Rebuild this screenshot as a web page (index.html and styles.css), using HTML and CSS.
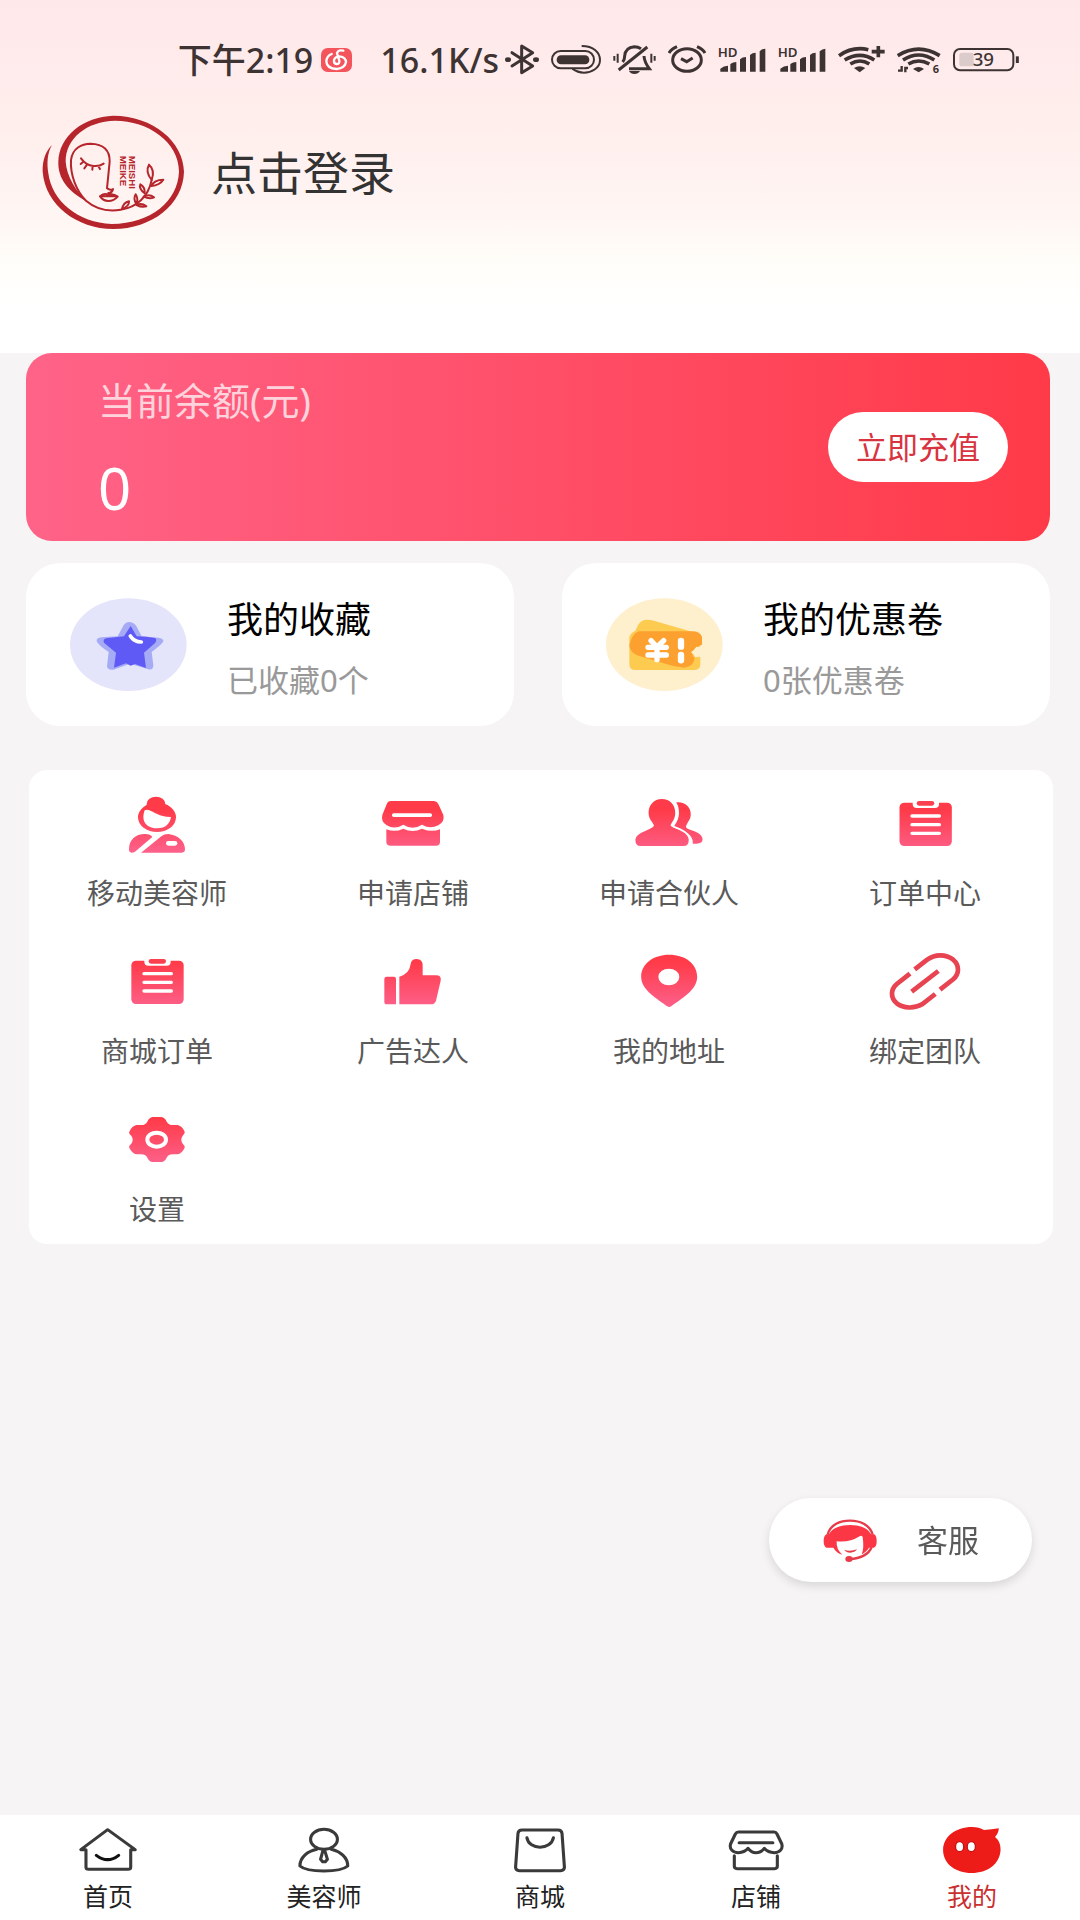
FILE: index.html
```html
<!DOCTYPE html>
<html lang="zh-CN">
<head>
<meta charset="utf-8">
<meta name="viewport" content="width=device-width, initial-scale=1">
<title>我的</title>
<link rel="stylesheet" href="styles.css">
</head>
<body>
<header class="header">
  <div class="status">
    <span class="status-text">下午2:19</span>
    <svg class="app-badge" width="31" height="48" viewBox="498 18 93 144" fill="none"><rect x="498" y="54" width="93" height="72" rx="20" fill="#f4555c"/><path d="M565 62Q549 58 546 70L553 92Q554 102 545 102Q536 101 537 91Q539 80 553 79Q573 81 573 97Q569 115 545 117Q515 115 514 94Q515 78 530 72" stroke="#fff" stroke-width="7" stroke-linecap="round"/></svg>
    <span class="status-text">16.1K/s</span>
    <div class="status-icons">
      <svg width="34" height="48" viewBox="1047 18 102 144" fill="none" stroke="#3d3333" stroke-width="9" stroke-linejoin="round" stroke-linecap="round"><path d="M1068 68L1130 108L1097 128V48L1130 68L1068 108"/><ellipse cx="1056" cy="89" rx="9" ry="7" fill="#3d3333" stroke="none"/><ellipse cx="1140" cy="89" rx="9" ry="7" fill="#3d3333" stroke="none"/></svg>
      <svg width="50" height="48" viewBox="1186 18 150 144" fill="none" stroke="#3d3333" stroke-width="6"><rect x="1203" y="76" width="98" height="27" rx="13" fill="#3d3333" stroke="none"/><rect x="1189" y="63" width="126" height="52" rx="26"/><path d="M1278 48C1314 48 1333 68 1333 90C1333 115 1306 128 1285 128C1270 128 1258 122 1250 116"/></svg>
      <svg width="43" height="48" viewBox="55 18 129 144" fill="none" stroke="#3d3333" stroke-width="9"><path d="M72 120L158 51"/><path d="M84 96Q90 89 90 78Q92 52 119 50Q130 50 139 56M148 78Q149 96 164 116H103"/><path d="M103 123H136Q131 132 119 132Q108 132 103 123Z" fill="#3d3333" stroke="none"/><path d="M59 78V92M69 71V98M170 71V98M180 78V92" stroke-width="6"/></svg>
      <svg width="38" height="48" viewBox="223 18 114 144" fill="none" stroke="#3d3333" stroke-width="9"><ellipse cx="280" cy="90" rx="43" ry="34"/><path d="M226 69Q233 57 250 50M310 50Q327 57 334 69M262 86L279 95L297 84"/></svg>
      <svg width="48" height="48" viewBox="367 18 144 144" fill="#3d3333"><text class="hd" x="366" y="80">HD</text><path d="M374 125V116Q384 107 397 107V125ZM404 125V102Q412 96 422 96V125ZM433 125V88Q440 81 451 81V125ZM463 125V75Q470 68 480 68V125ZM492 125V64Q500 56 509 56V125Z"/></svg>
      <svg width="48" height="48" viewBox="538 18 144 144" fill="#3d3333"><text class="hd" x="537" y="80">HD</text><path d="M545 125V116Q555 107 568 107V125ZM575 125V102Q583 96 593 96V125ZM604 125V88Q611 81 622 81V125ZM634 125V75Q641 68 651 68V125ZM663 125V64Q671 56 680 56V125Z"/></svg>
      <svg width="47" height="48" viewBox="718 18 141 144" fill="none" stroke="#3d3333" stroke-width="11"><path d="M721 77Q762 48 809 59M738 90Q784 62 827 90M755 102Q784 84 812 102M819 65H858M839 48V82"/><path d="M766 114Q783 104 800 114L783 127Z" fill="#3d3333" stroke="none"/></svg>
      <svg width="44" height="48" viewBox="889 18 132 144" fill="none" stroke="#3d3333" stroke-width="11"><path d="M891 77Q954 38 1017 77M907 90Q954 60 1001 90M923 102Q954 84 986 102"/><path d="M937 117Q954 105 970 117L954 127Z" fill="#3d3333" stroke="none"/><path d="M892 122H903V108M914 127V114H922" stroke-width="7"/><text class="wifi-six" x="996" y="128">6</text></svg>
      <svg width="67" height="48" viewBox="1061 18 201 144" fill="none"><rect x="1080" y="68" width="43" height="41" rx="8" fill="#dccbcb"/><rect x="1064" y="57" width="178" height="64" rx="18" stroke="#3d3333" stroke-width="6"/><path d="M1254 79V99" stroke="#3d3333" stroke-width="9"/><text class="battery" x="1152" y="108">39</text></svg>
    </div>
  </div>
  <a class="profile" href="#login">
    <svg width="145" height="116" viewBox="33 42 435 348" fill="none" stroke="#b5252b" stroke-linecap="round" stroke-linejoin="round">
      <path fill="#b5252b" stroke="none" d="M66 135C52 158 50 190 55 220C65 303 145 369 245 372C365 370 443 303 447 215C447 126 355 62 255 62C170 64 107 115 107 185C110 230 138 272 170 304C115 275 83 235 85 185C87 108 160 50 250 47C370 48 460 125 462 215C459 315 365 386 250 387C140 386 46 315 38 215C37 180 48 152 66 135Z"/>
      <path stroke-width="6" d="M168 302C140 275 120 225 123 180C127 145 155 131 182 131C220 132 240 150 239 185L231 265Q240 272 249 267Q247 278 235 279M168 302C195 325 230 336 272 329C320 322 355 290 365 240M210 289Q224 278 235 285Q248 279 263 290Q252 303 235 303Q219 302 210 289ZM210 289H262"/>
      <path stroke-width="6" d="M153 175Q168 196 190 198Q208 200 221 191M159 186L152 192M171 194L163 205M188 198L187 209M205 198L210 207"/>
      <path stroke-width="6" d="M365 240Q345 215 357 194Q376 210 365 240ZM364 258Q372 239 400 239Q390 255 364 258ZM344 280Q326 266 331 253Q346 262 344 280ZM341 290Q357 280 372 292Q358 298 341 290ZM319 312Q309 296 317 283Q326 297 319 312ZM320 315Q335 308 349 319Q335 323 320 315ZM276 327Q280 308 297 304Q298 318 276 327Z"/>
      <text class="logo-text" transform="translate(297 167) rotate(90)">MEISHI</text>
      <text class="logo-text" transform="translate(270 167) rotate(90)">MEIKE</text>
    </svg>
    <span class="profile-name">点击登录</span>
  </a>
</header>

<main class="main">
  <section class="balance">
    <div>
      <p class="balance-label">当前余额(元)</p>
      <p class="balance-value">0</p>
    </div>
    <button class="recharge" type="button">立即充值</button>
  </section>

  <section class="features">
    <a class="feature" href="#favorites">
      <svg width="117" height="93" viewBox="150 128 351 279"><ellipse cx="325" cy="268" rx="175" ry="139" fill="#e4e4fa"/><path fill="#a6abf5" d="M328 200Q345 202 352 218L365 243L415 247Q432 250 430 258Q425 268 395 290L400 330Q400 345 385 342L330 325L280 343Q262 345 261 333L266 290Q235 270 230 258Q228 248 245 246L293 243L308 215Q315 200 328 200Z"/><path fill="#5f5af6" d="M332 212L350 243Q380 244 405 248Q412 252 406 262L372 292L378 338L345 326L332 331L318 324L282 337L288 292L252 262Q248 252 258 249L312 243Z"/><path d="M331 242Q342 260 364 260" fill="none" stroke="#fff" stroke-width="11" stroke-linecap="round"/></svg>
      <div><h2 class="feature-title">我的收藏</h2><p class="feature-sub">已收藏0个</p></div>
    </a>
    <a class="feature" href="#coupons">
      <svg width="117" height="93" viewBox="167 128 351 279"><ellipse cx="342" cy="268" rx="175" ry="139" fill="#feefcd"/><path fill="#fdcb50" d="M265 206Q278 188 305 195L420 228Q453 232 455 250L450 270V325Q450 344 430 344H255Q237 344 237 325V245Q242 232 255 226Z"/><path fill="#fca130" d="M265 228H425Q450 228 455 245V268Q438 272 425 290Q425 302 433 308Q430 335 400 337Q380 335 350 327L260 300Q238 290 237 270Q245 235 265 228Z"/><path fill="#feefcd" d="M460 269Q449 278 438 274Q432 284 422 291Q432 298 435 306Q449 302 460 308Z"/><g fill="none" stroke="#fff" stroke-linecap="round"><path stroke-width="16" d="M302 256L320 275L340 256M293 276H348M293 299H348M320 275V313"/><path stroke-width="19" d="M392 257V274M392 299V315"/></g></svg>
      <div><h2 class="feature-title">我的优惠卷</h2><p class="feature-sub">0张优惠卷</p></div>
    </a>
  </section>

  <nav class="menu" aria-label="功能">
    <a class="menu-item" href="#beautician">
      <svg class="menu-icon" viewBox="291 105 240 180">
        <defs>
          <linearGradient id="row1" gradientUnits="userSpaceOnUse" x1="0" y1="150" x2="0" y2="275"><stop stop-color="#ff3b49"/><stop offset="1" stop-color="#fd608a"/></linearGradient>
          <linearGradient id="row2" gradientUnits="userSpaceOnUse" x1="0" y1="605" x2="0" y2="740"><stop stop-color="#ff3b49"/><stop offset="1" stop-color="#fd608a"/></linearGradient>
          <linearGradient id="row3" gradientUnits="userSpaceOnUse" x1="0" y1="115" x2="0" y2="245"><stop stop-color="#ff3b49"/><stop offset="1" stop-color="#fd608a"/></linearGradient>
        </defs>
        <g fill="url(#row1)"><ellipse cx="408" cy="132" rx="28" ry="22"/><ellipse cx="411" cy="172" rx="57" ry="44"/><path d="M327 268C327 240 345 222 375 222Q392 222 397 231L345 275Q340 278 335 278Q327 278 327 268ZM363 278L425 228Q432 222 445 222C475 225 495 245 495 268Q495 278 485 278Z"/></g>
        <path fill="#fff" d="M374 151C362 185 380 205 411 205C438 205 450 190 453 171C420 172 400 155 388 151Q380 147 374 151Z"/><rect x="438" y="243" width="34" height="14" rx="7" fill="#fff"/>
      </svg>
      <span>移动美容师</span>
    </a>
    <a class="menu-item" href="#apply-shop">
      <svg class="menu-icon" viewBox="1059 105 240 180"><path fill="url(#row1)" d="M1112 123H1240Q1250 123 1255 132L1270 165Q1275 185 1255 196Q1230 208 1206 194Q1178 212 1150 194Q1125 210 1100 196Q1082 185 1087 165L1100 133Q1104 123 1112 123ZM1099 208Q1125 218 1150 206Q1178 220 1206 206Q1235 218 1260 208V246Q1260 257 1248 257H1112Q1099 257 1099 246Z"/><rect x="1116" y="160" width="120" height="11" rx="5" fill="#fff"/></svg>
      <span>申请店铺</span>
    </a>
    <a class="menu-item" href="#apply-partner">
      <svg class="menu-icon" viewBox="263 105 237 180" preserveAspectRatio="none"><path fill="url(#row1)" d="M360 117C385 117 400 135 400 158C400 178 390 185 386 196C388 206 440 212 440 240Q440 258 425 258H297Q282 258 282 240C284 215 335 210 337 196C333 185 321 178 321 158C321 135 337 117 360 117ZM403 127C428 124 446 140 446 163C446 182 432 190 432 202C434 210 481 215 481 238Q481 251 463 251L452 251C455 228 430 210 397 198C405 185 411 175 411 158C411 145 408 135 403 127Z"/></svg>
      <span>申请合伙人</span>
    </a>
    <a class="menu-item" href="#orders">
      <svg class="menu-icon" viewBox="1020 105 237 180" preserveAspectRatio="none"><rect x="1063" y="128" width="155" height="130" rx="14" fill="url(#row1)"/><rect x="1102" y="112" width="78" height="32" rx="12" fill="#fff"/><rect x="1114" y="123" width="52" height="14" rx="7" fill="#fb4050"/><path d="M1100 168H1181M1100 194H1181M1100 220H1181" stroke="#fff" stroke-width="10" stroke-linecap="round"/></svg>
      <span>订单中心</span>
    </a>
    <a class="menu-item" href="#mall-orders">
      <svg class="menu-icon" viewBox="291 577 240 180"><rect x="334" y="600" width="157" height="130" rx="14" fill="url(#row2)"/><rect x="373" y="584" width="79" height="31" rx="12" fill="#fff"/><rect x="386" y="595" width="52" height="14" rx="7" fill="#fb4050"/><path d="M372 639H454M372 665H454M372 691H454" stroke="#fff" stroke-width="10" stroke-linecap="round"/></svg>
      <span>商城订单</span>
    </a>
    <a class="menu-item" href="#promoter">
      <svg class="menu-icon" viewBox="1059 577 240 180"><path fill="url(#row2)" d="M1100 648H1122Q1128 648 1128 655V731H1100Q1093 731 1093 723V655Q1093 648 1100 648ZM1138 648Q1168 640 1172 610Q1174 595 1190 595Q1208 595 1208 615V644H1248Q1265 644 1262 660L1248 720Q1245 731 1232 731H1138Z"/></svg>
      <span>广告达人</span>
    </a>
    <a class="menu-item" href="#address">
      <svg class="menu-icon" viewBox="263 577 237 180" preserveAspectRatio="none"><path fill="url(#row2)" d="M382 582C430 582 465 610 465 648C465 690 415 715 388 737Q382 741 376 737C350 715 299 690 299 648C299 610 335 582 382 582Z"/><ellipse cx="381" cy="649" rx="31" ry="25" fill="#fff"/></svg>
      <span>我的地址</span>
    </a>
    <a class="menu-item" href="#team">
      <svg class="menu-icon" viewBox="1020 577 237 180" preserveAspectRatio="none"><path fill="none" stroke="#e84351" stroke-width="14" d="M1108 626L1145 597C1168 580 1200 580 1222 597C1242 614 1240 640 1222 656L1183 687M1094 639L1055 670C1036 687 1036 712 1055 728C1075 744 1108 744 1130 731L1169 700M1099 693L1178 631"/></svg>
      <span>绑定团队</span>
    </a>
    <a class="menu-item" href="#settings">
      <svg class="menu-icon" viewBox="291 90 240 180"><path fill="url(#row3)" d="M398 108H424Q435 110 440 122Q446 132 458 132H472Q486 134 494 152Q496 157 488 164Q480 176 488 188Q496 195 494 200Q486 218 472 220H458Q446 220 440 230Q435 242 424 243H398Q387 242 382 230Q376 220 364 220H350Q336 218 328 200Q325 195 334 188Q342 176 334 164Q325 157 328 152Q336 134 350 132H364Q376 132 382 122Q387 110 398 108Z"/><ellipse cx="410" cy="176" rx="28" ry="21" fill="none" stroke="#fff" stroke-width="12"/></svg>
      <span>设置</span>
    </a>
  </nav>
</main>

<button class="service" type="button">
  <svg width="54" height="45" viewBox="250 141 162 135" fill="none"><path stroke="#e63b48" stroke-width="7" d="M264 191C272 160 302 149 331 149C362 149 391 162 399 191M396 228C388 250 362 263 330 264"/><path fill="#fb3745" d="M268 190C278 170 303 162 331 162C360 162 384 170 394 190H404Q411 194 411 211Q411 228 402 230H388C382 240 374 246 366 250Q374 232 369 198Q366 192 360 196Q330 215 291 211Q289 235 308 251Q290 246 281 230H260Q252 226 252 211Q252 194 260 190Z"/><path fill="#e63b48" d="M313 236Q330 243 352 235Q345 245 332 245Q320 245 313 236Z"/><ellipse cx="328" cy="264" rx="11" ry="9" fill="#e63b48"/></svg>
  <span>客服</span>
</button>

<nav class="tabs" aria-label="主导航">
  <a class="tab" href="#home">
    <svg class="tab-icon" viewBox="221 78 186 144" preserveAspectRatio="none"><path d="M313 89L235 149H250V202Q250 208 258 208H372Q380 208 380 202V149H393Z"/><path stroke="#111" d="M280 166Q313 192 345 166"/></svg>
    <span>首页</span>
  </a>
  <a class="tab" href="#beauticians">
    <svg class="tab-icon" viewBox="848 78 186 144" preserveAspectRatio="none"><ellipse cx="941" cy="118" rx="39" ry="30"/><path d="M920 148C893 154 871 172 871 198C893 218 988 218 1010 198C1010 172 988 154 962 148M938 151L931 178L937 185H945L951 178L943 151Z"/></svg>
    <span>美容师</span>
  </a>
  <a class="tab" href="#mall">
    <svg class="tab-icon" viewBox="-93 78 186 144" preserveAspectRatio="none"><path d="M-52 90H52Q63 90 64 100L71 202Q71 212 60 212H-60Q-71 212-71 202L-64 100Q-63 90-52 90ZM-38 113C-32 151 32 151 39 113"/></svg>
    <span>商城</span>
  </a>
  <a class="tab" href="#shops">
    <svg class="tab-icon" viewBox="534 78 186 144" preserveAspectRatio="none"><path d="M576 96H680Q685 96 688 102L702 132C706 148 695 158 680 158Q662 158 651 145Q641 158 627 158Q613 158 604 145Q593 158 576 158C560 158 549 148 553 132L567 102Q570 96 576 96ZM578 128H676M564 167V199Q564 206 572 206H681Q689 206 689 199V167"/></svg>
    <span>店铺</span>
  </a>
  <a class="tab tab-active" href="#mine" aria-current="page">
    <svg class="tab-icon tab-icon-fill" viewBox="1162 78 186 144" preserveAspectRatio="none"><path fill="#ed1c18" d="M1255 81C1270 81 1280 85 1290 90Q1312 88 1333 85Q1332 100 1322 111C1335 122 1338 135 1338 150C1336 192 1300 219 1254 219C1206 219 1171 190 1171 150C1171 110 1208 81 1255 81Z"/><g fill="#fff" stroke="#c51313" stroke-width="4"><ellipse cx="1219" cy="140" rx="12" ry="15"/><ellipse cx="1253" cy="140" rx="12" ry="15"/></g></svg>
    <span>我的</span>
  </a>
</nav>
</body>
</html>
```
FILE: styles.css
```css
* {
  box-sizing: border-box;
}

body {
  margin: 0;
  min-height: 100vh;
  display: flex;
  flex-direction: column;
  background: #f6f4f5;
  color: #333;
  font-family: "Noto Sans", "Noto Sans CJK SC", sans-serif;
}

h2,
p {
  margin: 0;
  font-weight: 400;
}

a {
  color: inherit;
  text-decoration: none;
}

button {
  border: 0;
  background: #fff;
  font: inherit;
  cursor: pointer;
}

svg {
  display: block;
  flex: none;
}

/* Header */
.header {
  padding: 36px 60px 123px 41px;
  background: linear-gradient(#ffe8ea 0%, #ffeeec 35%, #fff5f3 60%, #fffdf8 73%, #fff 88%);
}

.status {
  display: flex;
  align-items: center;
  justify-content: flex-end;
  height: 48px;
  color: #3d3333;
}

.status-text {
  font-size: 34px;
  line-height: 48px;
  font-weight: 500;
  white-space: nowrap;
}

.app-badge {
  margin: 0 28px 0 8px;
}

.status-icons {
  display: flex;
  gap: 12px;
  margin-left: 6px;
}

.hd,
.wifi-six,
.battery {
  fill: #3d3333;
  font-weight: 600;
}

.hd {
  font-size: 40px;
}

.wifi-six {
  font-size: 33px;
  font-weight: 700;
  stroke: none;
}

.battery {
  font-size: 56px;
  font-weight: 500;
  text-anchor: middle;
}

.profile {
  display: flex;
  align-items: center;
  gap: 25px;
  margin-top: 30px;
}

.profile-name {
  font-size: 46px;
  line-height: 64px;
}

.logo-text {
  fill: #b5252b;
  stroke: none;
  font-family: "Liberation Sans", sans-serif;
  font-size: 29px;
  font-weight: 700;
}

/* Balance */
.balance {
  display: flex;
  align-items: flex-start;
  justify-content: space-between;
  margin: 0 30px 0 26px;
  padding: 23px 42px 17px 72px;
  border-radius: 26px;
  background: linear-gradient(90deg, #ff6388, #ff3a48);
  color: #fff;
}

.balance-label {
  font-size: 38px;
  line-height: 48px;
  color: #ffd3dc;
}

.balance-value {
  margin-top: 28px;
  font-size: 58px;
  line-height: 72px;
}

.recharge {
  margin-top: 36px;
  padding: 12px 28px;
  border-radius: 35px;
  color: #d8343f;
  font-size: 31px;
  line-height: 46px;
}

/* Favourites and coupons */
.features {
  display: grid;
  grid-template-columns: 1fr 1fr;
  gap: 48px;
  margin: 22px 30px 0 26px;
}

.feature {
  display: flex;
  align-items: flex-start;
  gap: 40px;
  padding: 35px 20px 26px 44px;
  border-radius: 34px;
  background: #fff;
}

.feature-title {
  font-size: 36px;
  line-height: 44px;
  color: #000;
}

.feature-sub {
  margin-top: 18px;
  font-size: 31px;
  line-height: 40px;
  color: #999;
}

/* Menu */
.menu {
  display: grid;
  grid-template-columns: repeat(4, 1fr);
  margin: 44px 27px 40px 29px;
  border-radius: 18px;
  background: #fff;
}

.menu-item {
  display: flex;
  flex-direction: column;
  align-items: center;
  gap: 22px;
  padding: 25px 0 19px;
  font-size: 28px;
  line-height: 32px;
  color: #5a5a5a;
}

.menu-icon {
  width: 80px;
  height: 60px;
}

/* Floating customer service button */
.service {
  position: fixed;
  right: 48px;
  bottom: 338px;
  display: flex;
  align-items: center;
  gap: 40px;
  padding: 19px 53px 19px 54px;
  border-radius: 42px;
  box-shadow: 0 4px 10px rgba(0, 0, 0, 0.12);
  color: #5a5a5a;
  font-size: 31px;
  line-height: 46px;
}

/* Bottom tabs */
.tabs {
  position: sticky;
  bottom: 0;
  display: grid;
  grid-template-columns: repeat(5, 1fr);
  margin-top: auto;
  background: #fff;
}

.tab {
  display: flex;
  flex-direction: column;
  align-items: center;
  gap: 6px;
  padding: 11px 0 8px;
  font-size: 25px;
  line-height: 32px;
  color: #222;
}

.tab-active {
  color: #c9302f;
}

.tab-icon {
  width: 64px;
  height: 48px;
  fill: none;
  stroke: #3a3a3a;
  stroke-width: 9px;
  stroke-linecap: round;
  stroke-linejoin: round;
}

.tab-icon-fill {
  stroke: none;
}
```
